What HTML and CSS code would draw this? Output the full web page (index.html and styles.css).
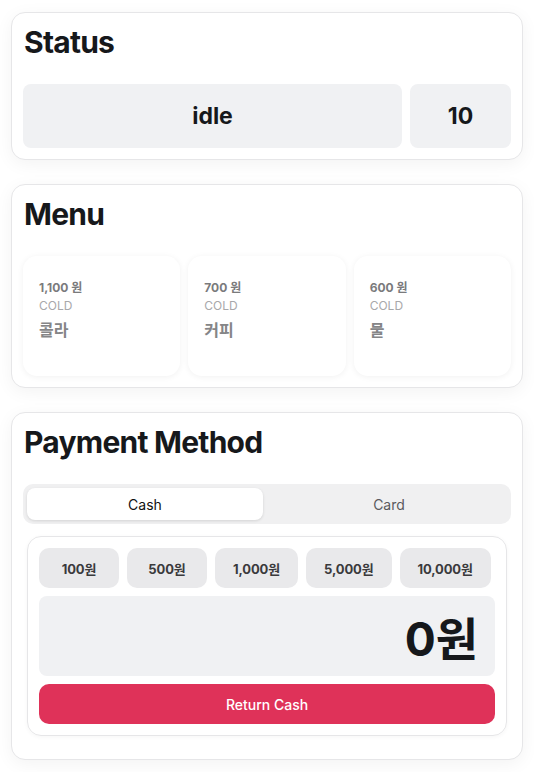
FILE: index.html
```html
<!DOCTYPE html>
<html lang="ko">
<head>
<meta charset="utf-8">
<title>Vending Machine</title>
<link rel="stylesheet" href="styles.css">
</head>
<body>
<main class="page">
  <section class="card">
    <h2 class="card-title">Status</h2>
    <div class="status-row">
      <div class="status-box status-main">idle</div>
      <div class="status-box status-count">10</div>
    </div>
  </section>

  <section class="card">
    <h2 class="card-title">Menu</h2>
    <div class="menu-grid">
      <div class="menu-item">
        <div class="menu-price">1,100 원</div>
        <div class="menu-temp">COLD</div>
        <div class="menu-name">콜라</div>
      </div>
      <div class="menu-item">
        <div class="menu-price">700 원</div>
        <div class="menu-temp">COLD</div>
        <div class="menu-name">커피</div>
      </div>
      <div class="menu-item">
        <div class="menu-price">600 원</div>
        <div class="menu-temp">COLD</div>
        <div class="menu-name">물</div>
      </div>
    </div>
  </section>

  <section class="card">
    <h2 class="card-title">Payment Method</h2>
    <div class="tabs">
      <button class="tab tab-active">Cash</button>
      <button class="tab">Card</button>
    </div>
    <div class="cash-panel">
      <div class="coins">
        <button class="coin">100원</button>
        <button class="coin">500원</button>
        <button class="coin">1,000원</button>
        <button class="coin">5,000원</button>
        <button class="coin">10,000원</button>
      </div>
      <div class="amount">0원</div>
      <button class="return-btn">Return Cash</button>
    </div>
  </section>
</main>
</body>
</html>
```

FILE: styles.css
```css
* {
  box-sizing: border-box;
}

html, body {
  margin: 0;
  padding: 0;
  background: #ffffff;
}

body {
  font-family: Inter, "Noto Sans CJK KR", sans-serif;
  color: #16181b;
}

.page {
  max-width: 512px;
  margin: 0 auto;
  padding: 12px 0;
  display: flex;
  flex-direction: column;
  gap: 24px;
}

.card {
  background: #ffffff;
  border: 1px solid #e6e6e8;
  border-radius: 14px;
  padding: 11px;
  box-shadow: 0 4px 18px rgba(0, 0, 0, 0.05);
}

.card-title {
  margin: 0 0 24px;
  padding-left: 1px;
  font-size: 30px;
  line-height: 36px;
  font-weight: 700;
  letter-spacing: -0.025em;
  color: #16181b;
}

.status-row {
  display: flex;
  gap: 8px;
}

.status-box {
  height: 64px;
  border-radius: 8px;
  background: #f0f1f3;
  display: flex;
  align-items: center;
  justify-content: center;
  font-size: 23px;
  font-weight: 700;
  color: #16181b;
}

.status-main {
  flex: 1;
}

.status-count {
  width: 101px;
}

.menu-grid {
  display: grid;
  grid-template-columns: repeat(3, 1fr);
  gap: 8px;
}

.menu-item {
  height: 120px;
  border-radius: 14px;
  background: #ffffff;
  padding: 23px 16px;
  box-shadow: 0 1px 6px rgba(0, 0, 0, 0.06);
}

.menu-price {
  font-size: 12px;
  line-height: 18px;
  font-weight: 700;
  color: #7a7a7c;
}

.menu-temp {
  font-size: 12px;
  line-height: 18px;
  color: #a8a8aa;
}

.menu-name {
  margin-top: 4px;
  font-size: 16px;
  line-height: 22px;
  font-weight: 700;
  color: #858587;
}

.tabs {
  display: flex;
  gap: 8px;
  padding: 4px;
  background: #f0f0f1;
  border-radius: 10px;
  height: 40px;
}

.tab {
  flex: 1;
  border: none;
  background: transparent;
  border-radius: 8px;
  font-family: inherit;
  font-size: 14px;
  color: #5a5a5e;
  cursor: pointer;
}

.tab-active {
  background: #ffffff;
  color: #111111;
  box-shadow: 0 1px 3px rgba(0, 0, 0, 0.12);
}

.cash-panel {
  margin: 12px 4px 12px;
  border: 1px solid #e6e6e8;
  border-radius: 14px;
  padding: 11px;
  display: flex;
  flex-direction: column;
  gap: 8px;
  box-shadow: 0 1px 4px rgba(0, 0, 0, 0.04);
}

.coins {
  display: flex;
  gap: 8px;
}

.coin {
  flex: 0 0 auto;
  white-space: nowrap;
  min-width: 80px;
  height: 40px;
  padding: 0 18px;
  border: none;
  border-radius: 10px;
  background: #e9e9eb;
  font-family: inherit;
  font-size: 13px;
  font-weight: 700;
  letter-spacing: -0.01em;
  color: #3a3a3c;
  cursor: pointer;
}

.amount {
  height: 80px;
  border-radius: 8px;
  background: #f0f1f3;
  display: flex;
  align-items: center;
  justify-content: flex-end;
  padding: 0 17px;
  font-size: 46px;
  font-weight: 700;
  color: #16181b;
}

.return-btn {
  height: 40px;
  border: none;
  border-radius: 10px;
  background: #df3259;
  color: #ffffff;
  font-family: inherit;
  font-size: 14px;
  font-weight: 500;
  cursor: pointer;
}
```
